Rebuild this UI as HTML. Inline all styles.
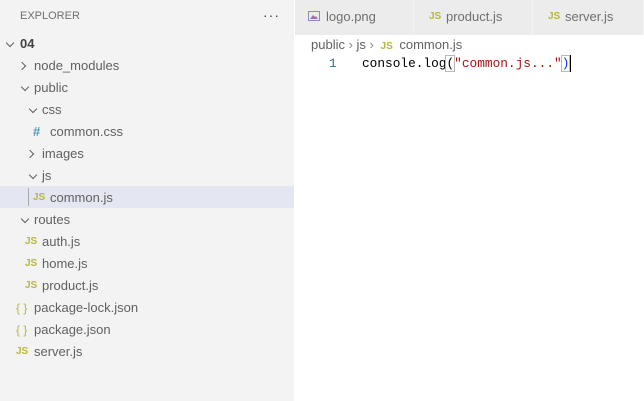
<!DOCTYPE html>
<html><head><meta charset="utf-8"><style>
*{margin:0;padding:0;box-sizing:border-box}
body{width:644px;height:401px;overflow:hidden;background:#fff;font-family:"Liberation Sans",sans-serif;font-size:13px;color:#616161;position:relative}
#side{position:absolute;left:0;top:0;width:294px;height:401px;background:#f3f3f3}
.hdr{position:absolute;left:20px;top:10px;font-size:11px;color:#6f6f6f}
.dots{position:absolute;left:263px;top:7px;font-size:14px;color:#424242;letter-spacing:1px}
.row{position:absolute;left:0;width:294px;height:22px;line-height:24px;color:#616161}
.row span{position:absolute}
.sel{background:#e4e6f1}
.chev{width:6px;height:6px;border-right:1.2px solid #616161;border-bottom:1.2px solid #616161;top:8px}
.down{transform:rotate(45deg)}
.right{transform:rotate(-45deg);top:9px}
.js{font-size:10px;font-weight:bold;color:#b7b73b}
.br{color:#b7b73b;font-size:12px}
.hash{color:#519aba;font-weight:bold}
#tabs{position:absolute;left:295px;top:0;width:349px;height:35px;background:#f3f3f3}
.tab{position:absolute;top:0;height:35px;background:#ececec;border-right:1px solid #f3f3f3;line-height:34px;color:#6f6f6f;font-size:13px}
.code{font-family:"Liberation Mono",monospace;font-size:12.8px}
</style></head><body>
<div id="side">
<div class="hdr">EXPLORER</div>
<div class="dots">···</div>
<div class="row" style="top:32px"><span class="chev down" style="left:7px"></span><span style="left:20px;font-weight:bold;color:#424242">04</span></div>
<div class="row" style="top:54px"><span class="chev right" style="left:19px"></span><span style="left:34px">node_modules</span></div>
<div class="row" style="top:76px"><span class="chev down" style="left:22px"></span><span style="left:34px">public</span></div>
<div class="row" style="top:98px"><span class="chev down" style="left:30px"></span><span style="left:42px">css</span></div>
<div class="row" style="top:120px"><span class="hash" style="left:33px">#</span><span style="left:50px">common.css</span></div>
<div class="row" style="top:142px"><span class="chev right" style="left:27px"></span><span style="left:42px">images</span></div>
<div class="row" style="top:164px"><span class="chev down" style="left:30px"></span><span style="left:42px">js</span></div>
<div class="row sel" style="top:186px"><span style="left:28px;top:2px;width:1px;height:18px;background:#a9a9a9"></span><span class="js" style="left:33px">JS</span><span style="left:50px">common.js</span></div>
<div class="row" style="top:208px"><span class="chev down" style="left:22px"></span><span style="left:34px">routes</span></div>
<div class="row" style="top:230px"><span class="js" style="left:25px">JS</span><span style="left:42px">auth.js</span></div>
<div class="row" style="top:252px"><span class="js" style="left:25px">JS</span><span style="left:42px">home.js</span></div>
<div class="row" style="top:274px"><span class="js" style="left:25px">JS</span><span style="left:42px">product.js</span></div>
<div class="row" style="top:296px"><span class="br" style="left:16px">{ }</span><span style="left:34px">package-lock.json</span></div>
<div class="row" style="top:318px"><span class="br" style="left:16px">{ }</span><span style="left:34px">package.json</span></div>
<div class="row" style="top:340px"><span class="js" style="left:16px">JS</span><span style="left:34px">server.js</span></div>
</div>
<div id="tabs">
<div class="tab" style="left:0;width:119px"><svg style="position:absolute;left:13px;top:11px" width="12" height="10"><rect x="0.5" y="0.5" width="11" height="9" fill="none" stroke="#8a8ac0"/><path d="M2 8L5 4L7 6L8 5L10 8Z" fill="#a070b0"/></svg><span style="position:absolute;left:31px">logo.png</span></div>
<div class="tab" style="left:119px;width:119px"><span class="js" style="position:absolute;left:15px">JS</span><span style="position:absolute;left:32px">product.js</span></div>
<div class="tab" style="left:238px;width:111px"><span class="js" style="position:absolute;left:15px">JS</span><span style="position:absolute;left:32px">server.js</span></div>
</div>
<div style="position:absolute;left:311px;top:36px;line-height:18px;color:#616161">public <span style="color:#888">›</span> js <span style="color:#888">›</span> <span class="js" style="margin:0 3px">JS</span> common.js</div>
<div class="code" style="position:absolute;left:329px;top:55px;line-height:18px;color:#237893">1</div>
<div class="code" style="position:absolute;left:362px;top:55px;line-height:18px;color:#000">console.log<span style="outline:1px solid #b9b9b9">(</span><span style="color:#a31515">"common.js..."</span><span style="outline:1px solid #b9b9b9;color:#0431fa">)</span><span style="display:inline-block;width:2px;height:17px;background:#000;vertical-align:middle"></span></div>
</body></html>
